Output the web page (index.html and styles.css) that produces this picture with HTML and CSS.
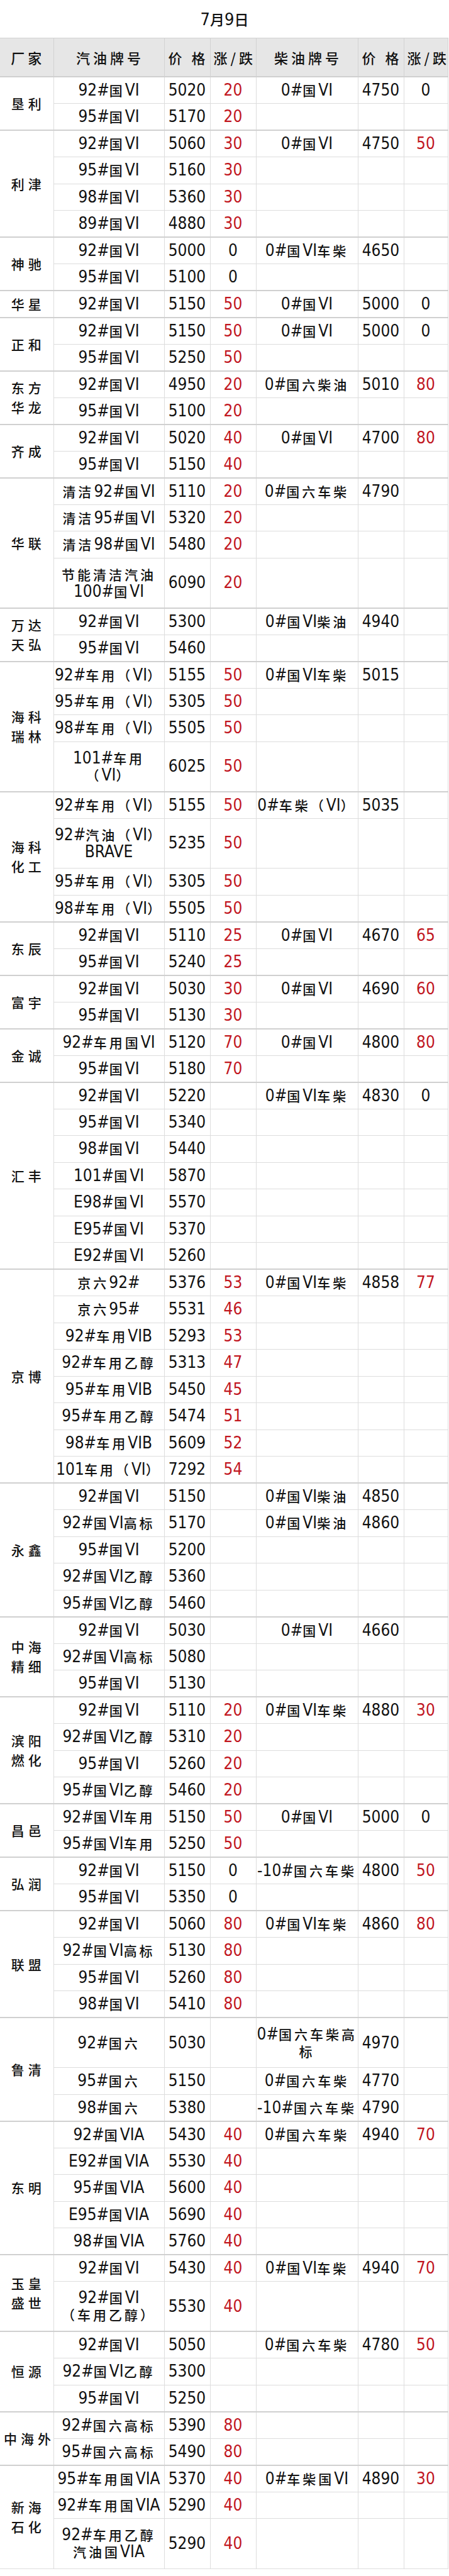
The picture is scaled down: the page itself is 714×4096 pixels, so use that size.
FILE: index.html
```html
<!DOCTYPE html>
<html lang="zh-CN">
<head>
<meta charset="utf-8">
<title>7月9日</title>
<link rel="stylesheet" href="styles.css">
</head>
<body>
<div class="title">7<span class="k">月</span>9<span class="k">日</span></div>
<table class="prices">
<colgroup><col class="c1"><col class="c2"><col class="c3"><col class="c4"><col class="c5"><col class="c6"><col class="c7"></colgroup>
<thead>
<tr><th class="co">厂家</th><th class="h">汽油牌号</th><th class="h">价 格</th><th class="h">涨/跌</th><th class="h">柴油牌号</th><th class="h">价 格</th><th class="h">涨/跌</th></tr>
</thead>
<tbody>
<tr><td class="co" rowspan="2">垦利</td><td>92#<span class="k">国</span>VI</td><td>5020</td><td class="up">20</td><td>0#<span class="k">国</span>VI</td><td>4750</td><td>0</td></tr>
<tr><td>95#<span class="k">国</span>VI</td><td>5170</td><td class="up">20</td><td></td><td></td><td></td></tr>
</tbody>
<tbody>
<tr><td class="co" rowspan="4">利津</td><td>92#<span class="k">国</span>VI</td><td>5060</td><td class="up">30</td><td>0#<span class="k">国</span>VI</td><td>4750</td><td class="up">50</td></tr>
<tr><td>95#<span class="k">国</span>VI</td><td>5160</td><td class="up">30</td><td></td><td></td><td></td></tr>
<tr><td>98#<span class="k">国</span>VI</td><td>5360</td><td class="up">30</td><td></td><td></td><td></td></tr>
<tr><td>89#<span class="k">国</span>VI</td><td>4880</td><td class="up">30</td><td></td><td></td><td></td></tr>
</tbody>
<tbody>
<tr><td class="co" rowspan="2">神驰</td><td>92#<span class="k">国</span>VI</td><td>5000</td><td>0</td><td>0#<span class="k">国</span>VI<span class="k">车柴</span></td><td>4650</td><td></td></tr>
<tr><td>95#<span class="k">国</span>VI</td><td>5100</td><td>0</td><td></td><td></td><td></td></tr>
</tbody>
<tbody>
<tr><td class="co">华星</td><td>92#<span class="k">国</span>VI</td><td>5150</td><td class="up">50</td><td>0#<span class="k">国</span>VI</td><td>5000</td><td>0</td></tr>
</tbody>
<tbody>
<tr><td class="co" rowspan="2">正和</td><td>92#<span class="k">国</span>VI</td><td>5150</td><td class="up">50</td><td>0#<span class="k">国</span>VI</td><td>5000</td><td>0</td></tr>
<tr><td>95#<span class="k">国</span>VI</td><td>5250</td><td class="up">50</td><td></td><td></td><td></td></tr>
</tbody>
<tbody>
<tr><td class="co" rowspan="2">东方<br>华龙</td><td>92#<span class="k">国</span>VI</td><td>4950</td><td class="up">20</td><td>0#<span class="k">国六柴油</span></td><td>5010</td><td class="up">80</td></tr>
<tr><td>95#<span class="k">国</span>VI</td><td>5100</td><td class="up">20</td><td></td><td></td><td></td></tr>
</tbody>
<tbody>
<tr><td class="co" rowspan="2">齐成</td><td>92#<span class="k">国</span>VI</td><td>5020</td><td class="up">40</td><td>0#<span class="k">国</span>VI</td><td>4700</td><td class="up">80</td></tr>
<tr><td>95#<span class="k">国</span>VI</td><td>5150</td><td class="up">40</td><td></td><td></td><td></td></tr>
</tbody>
<tbody>
<tr><td class="co" rowspan="4">华联</td><td><span class="k">清洁</span>92#<span class="k">国</span>VI</td><td>5110</td><td class="up">20</td><td>0#<span class="k">国六车柴</span></td><td>4790</td><td></td></tr>
<tr><td><span class="k">清洁</span>95#<span class="k">国</span>VI</td><td>5320</td><td class="up">20</td><td></td><td></td><td></td></tr>
<tr><td><span class="k">清洁</span>98#<span class="k">国</span>VI</td><td>5480</td><td class="up">20</td><td></td><td></td><td></td></tr>
<tr class="dbl"><td><span class="k">节能清洁汽油</span><br>100#<span class="k">国</span>VI</td><td>6090</td><td class="up">20</td><td></td><td></td><td></td></tr>
</tbody>
<tbody>
<tr><td class="co" rowspan="2">万达<br>天弘</td><td>92#<span class="k">国</span>VI</td><td>5300</td><td></td><td>0#<span class="k">国</span>VI<span class="k">柴油</span></td><td>4940</td><td></td></tr>
<tr><td>95#<span class="k">国</span>VI</td><td>5460</td><td></td><td></td><td></td><td></td></tr>
</tbody>
<tbody>
<tr><td class="co" rowspan="4">海科<br>瑞林</td><td>92#<span class="k">车用（</span>VI<span class="k">）</span></td><td>5155</td><td class="up">50</td><td>0#<span class="k">国</span>VI<span class="k">车柴</span></td><td>5015</td><td></td></tr>
<tr><td>95#<span class="k">车用（</span>VI<span class="k">）</span></td><td>5305</td><td class="up">50</td><td></td><td></td><td></td></tr>
<tr><td>98#<span class="k">车用（</span>VI<span class="k">）</span></td><td>5505</td><td class="up">50</td><td></td><td></td><td></td></tr>
<tr class="dbl"><td>101#<span class="k">车用</span><br><span class="k">（</span>VI<span class="k">）</span></td><td>6025</td><td class="up">50</td><td></td><td></td><td></td></tr>
</tbody>
<tbody>
<tr><td class="co" rowspan="4">海科<br>化工</td><td>92#<span class="k">车用（</span>VI<span class="k">）</span></td><td>5155</td><td class="up">50</td><td>0#<span class="k">车柴（</span>VI<span class="k">）</span></td><td>5035</td><td></td></tr>
<tr class="dbl"><td>92#<span class="k">汽油（</span>VI<span class="k">）</span><br>BRAVE</td><td>5235</td><td class="up">50</td><td></td><td></td><td></td></tr>
<tr><td>95#<span class="k">车用（</span>VI<span class="k">）</span></td><td>5305</td><td class="up">50</td><td></td><td></td><td></td></tr>
<tr><td>98#<span class="k">车用（</span>VI<span class="k">）</span></td><td>5505</td><td class="up">50</td><td></td><td></td><td></td></tr>
</tbody>
<tbody>
<tr><td class="co" rowspan="2">东辰</td><td>92#<span class="k">国</span>VI</td><td>5110</td><td class="up">25</td><td>0#<span class="k">国</span>VI</td><td>4670</td><td class="up">65</td></tr>
<tr><td>95#<span class="k">国</span>VI</td><td>5240</td><td class="up">25</td><td></td><td></td><td></td></tr>
</tbody>
<tbody>
<tr><td class="co" rowspan="2">富宇</td><td>92#<span class="k">国</span>VI</td><td>5030</td><td class="up">30</td><td>0#<span class="k">国</span>VI</td><td>4690</td><td class="up">60</td></tr>
<tr><td>95#<span class="k">国</span>VI</td><td>5130</td><td class="up">30</td><td></td><td></td><td></td></tr>
</tbody>
<tbody>
<tr><td class="co" rowspan="2">金诚</td><td>92#<span class="k">车用国</span>VI</td><td>5120</td><td class="up">70</td><td>0#<span class="k">国</span>VI</td><td>4800</td><td class="up">80</td></tr>
<tr><td>95#<span class="k">国</span>VI</td><td>5180</td><td class="up">70</td><td></td><td></td><td></td></tr>
</tbody>
<tbody>
<tr><td class="co" rowspan="7">汇丰</td><td>92#<span class="k">国</span>VI</td><td>5220</td><td></td><td>0#<span class="k">国</span>VI<span class="k">车柴</span></td><td>4830</td><td>0</td></tr>
<tr><td>95#<span class="k">国</span>VI</td><td>5340</td><td></td><td></td><td></td><td></td></tr>
<tr><td>98#<span class="k">国</span>VI</td><td>5440</td><td></td><td></td><td></td><td></td></tr>
<tr><td>101#<span class="k">国</span>VI</td><td>5870</td><td></td><td></td><td></td><td></td></tr>
<tr><td>E98#<span class="k">国</span>VI</td><td>5570</td><td></td><td></td><td></td><td></td></tr>
<tr><td>E95#<span class="k">国</span>VI</td><td>5370</td><td></td><td></td><td></td><td></td></tr>
<tr><td>E92#<span class="k">国</span>VI</td><td>5260</td><td></td><td></td><td></td><td></td></tr>
</tbody>
<tbody>
<tr><td class="co" rowspan="8">京博</td><td><span class="k">京六</span>92#</td><td>5376</td><td class="up">53</td><td>0#<span class="k">国</span>VI<span class="k">车柴</span></td><td>4858</td><td class="up">77</td></tr>
<tr><td><span class="k">京六</span>95#</td><td>5531</td><td class="up">46</td><td></td><td></td><td></td></tr>
<tr><td>92#<span class="k">车用</span>VIB</td><td>5293</td><td class="up">53</td><td></td><td></td><td></td></tr>
<tr><td>92#<span class="k">车用乙醇</span></td><td>5313</td><td class="up">47</td><td></td><td></td><td></td></tr>
<tr><td>95#<span class="k">车用</span>VIB</td><td>5450</td><td class="up">45</td><td></td><td></td><td></td></tr>
<tr><td>95#<span class="k">车用乙醇</span></td><td>5474</td><td class="up">51</td><td></td><td></td><td></td></tr>
<tr><td>98#<span class="k">车用</span>VIB</td><td>5609</td><td class="up">52</td><td></td><td></td><td></td></tr>
<tr><td>101<span class="k">车用（</span>VI<span class="k">）</span></td><td>7292</td><td class="up">54</td><td></td><td></td><td></td></tr>
</tbody>
<tbody>
<tr><td class="co" rowspan="5">永鑫</td><td>92#<span class="k">国</span>VI</td><td>5150</td><td></td><td>0#<span class="k">国</span>VI<span class="k">柴油</span></td><td>4850</td><td></td></tr>
<tr><td>92#<span class="k">国</span>VI<span class="k">高标</span></td><td>5170</td><td></td><td>0#<span class="k">国</span>VI<span class="k">柴油</span></td><td>4860</td><td></td></tr>
<tr><td>95#<span class="k">国</span>VI</td><td>5200</td><td></td><td></td><td></td><td></td></tr>
<tr><td>92#<span class="k">国</span>VI<span class="k">乙醇</span></td><td>5360</td><td></td><td></td><td></td><td></td></tr>
<tr><td>95#<span class="k">国</span>VI<span class="k">乙醇</span></td><td>5460</td><td></td><td></td><td></td><td></td></tr>
</tbody>
<tbody>
<tr><td class="co" rowspan="3">中海<br>精细</td><td>92#<span class="k">国</span>VI</td><td>5030</td><td></td><td>0#<span class="k">国</span>VI</td><td>4660</td><td></td></tr>
<tr><td>92#<span class="k">国</span>VI<span class="k">高标</span></td><td>5080</td><td></td><td></td><td></td><td></td></tr>
<tr><td>95#<span class="k">国</span>VI</td><td>5130</td><td></td><td></td><td></td><td></td></tr>
</tbody>
<tbody>
<tr><td class="co" rowspan="4">滨阳<br>燃化</td><td>92#<span class="k">国</span>VI</td><td>5110</td><td class="up">20</td><td>0#<span class="k">国</span>VI<span class="k">车柴</span></td><td>4880</td><td class="up">30</td></tr>
<tr><td>92#<span class="k">国</span>VI<span class="k">乙醇</span></td><td>5310</td><td class="up">20</td><td></td><td></td><td></td></tr>
<tr><td>95#<span class="k">国</span>VI</td><td>5260</td><td class="up">20</td><td></td><td></td><td></td></tr>
<tr><td>95#<span class="k">国</span>VI<span class="k">乙醇</span></td><td>5460</td><td class="up">20</td><td></td><td></td><td></td></tr>
</tbody>
<tbody>
<tr><td class="co" rowspan="2">昌邑</td><td>92#<span class="k">国</span>VI<span class="k">车用</span></td><td>5150</td><td class="up">50</td><td>0#<span class="k">国</span>VI</td><td>5000</td><td>0</td></tr>
<tr><td>95#<span class="k">国</span>VI<span class="k">车用</span></td><td>5250</td><td class="up">50</td><td></td><td></td><td></td></tr>
</tbody>
<tbody>
<tr><td class="co" rowspan="2">弘润</td><td>92#<span class="k">国</span>VI</td><td>5150</td><td>0</td><td>-10#<span class="k">国六车柴</span></td><td>4800</td><td class="up">50</td></tr>
<tr><td>95#<span class="k">国</span>VI</td><td>5350</td><td>0</td><td></td><td></td><td></td></tr>
</tbody>
<tbody>
<tr><td class="co" rowspan="4">联盟</td><td>92#<span class="k">国</span>VI</td><td>5060</td><td class="up">80</td><td>0#<span class="k">国</span>VI<span class="k">车柴</span></td><td>4860</td><td class="up">80</td></tr>
<tr><td>92#<span class="k">国</span>VI<span class="k">高标</span></td><td>5130</td><td class="up">80</td><td></td><td></td><td></td></tr>
<tr><td>95#<span class="k">国</span>VI</td><td>5260</td><td class="up">80</td><td></td><td></td><td></td></tr>
<tr><td>98#<span class="k">国</span>VI</td><td>5410</td><td class="up">80</td><td></td><td></td><td></td></tr>
</tbody>
<tbody>
<tr class="dbl"><td class="co" rowspan="3">鲁清</td><td>92#<span class="k">国六</span></td><td>5030</td><td></td><td>0#<span class="k">国六车柴高</span><br><span class="k">标</span></td><td>4970</td><td></td></tr>
<tr><td>95#<span class="k">国六</span></td><td>5150</td><td></td><td>0#<span class="k">国六车柴</span></td><td>4770</td><td></td></tr>
<tr><td>98#<span class="k">国六</span></td><td>5380</td><td></td><td>-10#<span class="k">国六车柴</span></td><td>4790</td><td></td></tr>
</tbody>
<tbody>
<tr><td class="co" rowspan="5">东明</td><td>92#<span class="k">国</span>VIA</td><td>5430</td><td class="up">40</td><td>0#<span class="k">国六车柴</span></td><td>4940</td><td class="up">70</td></tr>
<tr><td>E92#<span class="k">国</span>VIA</td><td>5530</td><td class="up">40</td><td></td><td></td><td></td></tr>
<tr><td>95#<span class="k">国</span>VIA</td><td>5600</td><td class="up">40</td><td></td><td></td><td></td></tr>
<tr><td>E95#<span class="k">国</span>VIA</td><td>5690</td><td class="up">40</td><td></td><td></td><td></td></tr>
<tr><td>98#<span class="k">国</span>VIA</td><td>5760</td><td class="up">40</td><td></td><td></td><td></td></tr>
</tbody>
<tbody>
<tr><td class="co" rowspan="2">玉皇<br>盛世</td><td>92#<span class="k">国</span>VI</td><td>5430</td><td class="up">40</td><td>0#<span class="k">国</span>VI<span class="k">车柴</span></td><td>4940</td><td class="up">70</td></tr>
<tr class="dbl"><td>92#<span class="k">国</span>VI<br><span class="k">（车用乙醇）</span></td><td>5530</td><td class="up">40</td><td></td><td></td><td></td></tr>
</tbody>
<tbody>
<tr><td class="co" rowspan="3">恒源</td><td>92#<span class="k">国</span>VI</td><td>5050</td><td></td><td>0#<span class="k">国六车柴</span></td><td>4780</td><td class="up">50</td></tr>
<tr><td>92#<span class="k">国</span>VI<span class="k">乙醇</span></td><td>5300</td><td></td><td></td><td></td><td></td></tr>
<tr><td>95#<span class="k">国</span>VI</td><td>5250</td><td></td><td></td><td></td><td></td></tr>
</tbody>
<tbody>
<tr><td class="co" rowspan="2">中海外</td><td>92#<span class="k">国六高标</span></td><td>5390</td><td class="up">80</td><td></td><td></td><td></td></tr>
<tr><td>95#<span class="k">国六高标</span></td><td>5490</td><td class="up">80</td><td></td><td></td><td></td></tr>
</tbody>
<tbody>
<tr><td class="co" rowspan="3">新海<br>石化</td><td>95#<span class="k">车用国</span>VIA</td><td>5370</td><td class="up">40</td><td>0#<span class="k">车柴国</span>VI</td><td>4890</td><td class="up">30</td></tr>
<tr><td>92#<span class="k">车用国</span>VIA</td><td>5290</td><td class="up">40</td><td></td><td></td><td></td></tr>
<tr class="dbl"><td>92#<span class="k">车用乙醇</span><br><span class="k">汽油国</span>VIA</td><td>5290</td><td class="up">40</td><td></td><td></td><td></td></tr>
</tbody>
</table>
</body>
</html>
```

FILE: styles.css
```css
html, body {
  margin: 0;
  padding: 0;
  background: #ffffff;
}

body {
  color: #111111;
  font-family: "Liberation Sans Narrow", "DejaVu Sans Condensed", "Liberation Sans", "Noto Sans CJK SC", sans-serif;
}

.title {
  height: 60px;
  display: flex;
  align-items: center;
  justify-content: center;
  font-size: 27px;
}

.title .k {
  font-size: 23px;
  letter-spacing: 0;
}

.k {
  font-family: "Noto Sans CJK SC", sans-serif;
  font-size: 21px;
  font-weight: 500;
  letter-spacing: 4px;
}

.prices {
  width: 712px;
  border-collapse: collapse;
  table-layout: fixed;
}

.c1 { width: 85px; }
.c2 { width: 176px; }
.c3 { width: 73px; }
.c4 { width: 73px; }
.c5 { width: 162px; }
.c6 { width: 73px; }
.c7 { width: 70px; }

.prices th,
.prices td {
  padding: 0 1px;
  text-align: center;
  vertical-align: middle;
  white-space: nowrap;
  border: 1px solid #dddddd;
  font-size: 26px;
  line-height: 27px;
  font-weight: normal;
}

.prices th:first-child,
.prices td.co {
  border-left: none;
}

.prices thead th {
  height: 60px;
  background: #e6e6e6;
  border-color: #d2d2d2;
  font-family: "Noto Sans CJK SC", sans-serif;
  font-size: 22px;
  font-weight: 500;
  letter-spacing: 5px;
  padding-left: 5px;
}

.prices td.co {
  font-family: "Noto Sans CJK SC", sans-serif;
  font-size: 21px;
  font-weight: 500;
  line-height: 31px;
  letter-spacing: 6px;
  padding-left: 6px;
}

.prices tbody tr {
  height: 42.5px;
}

.prices tbody tr.dbl {
  height: 79.5px;
}

.prices tbody tr:first-child td {
  border-top: 2px solid #d0d0d0;
}

.prices td.up {
  color: #c1161f;
}
```
